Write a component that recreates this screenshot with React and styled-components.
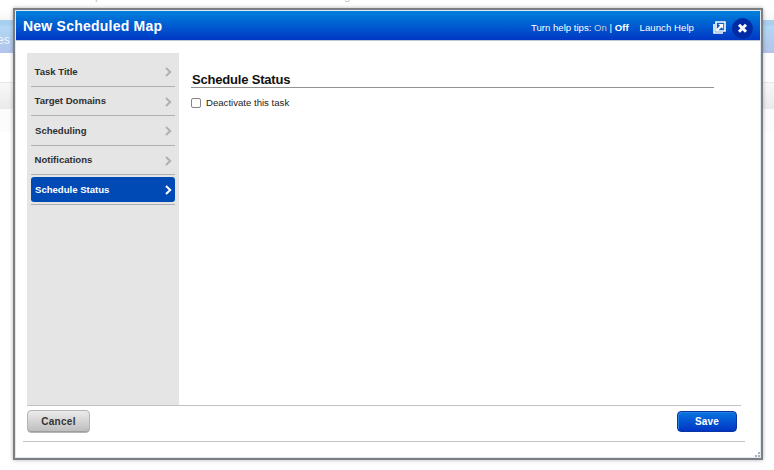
import React from "react";
import styled, { createGlobalStyle } from "styled-components";

const GlobalStyle = createGlobalStyle`
  * { box-sizing: border-box; }
  body { margin: 0; background: #fff; font-family: "Liberation Sans", Arial, sans-serif; }
`;

const Page = styled.div`
  position: relative;
  width: 774px;
  height: 470px;
  overflow: hidden;
  background: #fff;
`;

const TopStrip = styled.div`
  display: flex;
  gap: 243px;
  height: 20px;
  padding-left: 95px;
  background: linear-gradient(#fff 0 10px, #f6f6f6);
`;

const Descender = styled.span`
  height: 2px;
  margin-top: -10px;
  line-height: 12px;
  font-size: 11px;
  color: #c4bab4;
`;

const NavBar = styled.div`
  display: flex;
  align-items: center;
  height: 33px;
  padding-top: 7px;
  background: linear-gradient(#a9cfef 0 5px, #b0d8f4 6px, #b3c3ed);
  font-size: 12px;
  color: #eef5fc;
  text-indent: -3px;
`;

const SubBar = styled.div`
  height: 27px;
  margin-top: 29px;
  border-top: 1px solid #e8e8e8;
  background: linear-gradient(#f8f8f8, #eaeaea);
`;

const LowerBand = styled.div`
  height: 23px;
  background: #fcfcfc;
`;

const Dialog = styled.section`
  position: absolute;
  left: 13px;
  top: 8px;
  display: flex;
  flex-direction: column;
  width: 750px;
  height: 452px;
  border: 2px solid #7b7f84;
  background: #fff;
  box-shadow: inset 0 0 0 1px #dfe9f5, 0 0 4px rgba(0, 0, 0, 0.3);
`;

const Header = styled.header`
  display: flex;
  align-items: center;
  height: 30px;
  margin: 1px 1px 0;
  padding: 0 7px;
  border-bottom: 1px solid #bfc6d6;
  background: linear-gradient(#0081dc, #0037c4);
  color: #fff;
  flex: none;
`;

const Title = styled.h1`
  flex: 1;
  margin: 0;
  font-size: 14px;
  line-height: 16px;
  letter-spacing: 0.23px;
`;

const HelpTips = styled.div`
  margin: 5px 11px 0 0;
  font-size: 9.6px;
  line-height: 12px;
  white-space: pre;
`;

const Muted = styled.span`
  color: #c6cbd6;
`;

const HelpLink = styled.a`
  margin: 5px 19px 0 0;
  font-size: 9.6px;
  line-height: 12px;
  letter-spacing: 0.05px;
`;

const IconButton = styled.button`
  display: flex;
  padding: 0;
  border: 0;
  background: none;
  margin: ${(p) => p.$margin};
`;

const Body = styled.div`
  display: flex;
  height: 353px;
  margin: 12px 20px 0 12px;
  border-bottom: 1px solid #c2c2c2;
  flex: none;
`;

const Sidebar = styled.nav`
  width: 152px;
  padding: 4px;
  background: #e5e5e5;
`;

const NavLabel = styled.a`
  display: flex;
  align-items: center;
  justify-content: space-between;
  height: 25px;
  padding: 0 3px 0 ${(p) => p.$indent}px;
  border-radius: 3px;
  background: ${(p) => (p.$active ? "#004ab5" : "transparent")};
  color: ${(p) => (p.$active ? "#fff" : "#303030")};
  font-size: 9.6px;
  font-weight: bold;
  line-height: 12px;
  letter-spacing: -0.02px;
  svg {
    margin-top: 1px;
    stroke: ${(p) => (p.$active ? "#fff" : "#b0b0b0")};
  }
`;

const NavItem = styled.div`
  height: 30px;
  padding: 2px 0;
  border-bottom: 1px solid #afafaf;
  &:nth-child(even) {
    height: 29px;
    padding-top: 1px;
  }
  &:nth-child(even) svg { margin-top: 3px; }
`;

const Content = styled.main`
  width: 535px;
  padding: 17px 0 0 13px;
`;

const SectionTitle = styled.h2`
  height: 18px;
  margin: 0 0 9px -1px;
  padding-left: 1px;
  border-bottom: 1px solid #929292;
  color: #111;
  font-size: 13px;
  line-height: 19px;
  letter-spacing: -0.19px;
`;

const CheckRow = styled.label`
  display: flex;
  align-items: center;
  gap: 5px;
  height: 12px;
  margin-left: -1px;
  color: #222;
  font-size: 9.6px;
  line-height: 12px;
`;

const Checkbox = styled.input`
  appearance: none;
  width: 10px;
  height: 10px;
  margin: 0;
  border: 1px solid #858585;
  border-radius: 2px;
  background: #fff;
`;

const Footer = styled.footer`
  display: flex;
  justify-content: space-between;
  height: 36px;
  margin: 0 16px 0 8px;
  padding: 4px 8px 0 4px;
  border-bottom: 1px solid #c4c4c4;
  flex: none;
`;

const Button = styled.button`
  height: ${(p) => (p.$primary ? 21 : 23)}px;
  width: ${(p) => (p.$primary ? 60 : 63)}px;
  margin-top: ${(p) => (p.$primary ? 1 : 0)}px;
  padding: 0;
  border: 1px solid ${(p) => (p.$primary ? "#0835a3" : "#b4b4b4")};
  border-radius: 4px;
  background: ${(p) => (p.$primary ? "linear-gradient(#0874df, #0035c4)" : "linear-gradient(#ececec, #bcbcbc)")};
  box-shadow: ${(p) => (p.$primary ? "inset 1px 1px 0 #2483e0" : "inset 0 -1px 0 #9e9e9e")};
  color: ${(p) => (p.$primary ? "#fff" : "#333")};
  font: bold 10px/12px "Liberation Sans", Arial, sans-serif;
  letter-spacing: ${(p) => (p.$primary ? 0.15 : 0.3)}px;
`;

const ResizeGrip = styled.svg`
  position: absolute;
  right: 1px;
  bottom: 1px;
`;

const items = [
  { label: "Task Title", indent: 3.5 },
  { label: "Target Domains", indent: 3.5 },
  { label: "Scheduling", indent: 4 },
  { label: "Notifications", indent: 3.5 },
  { label: "Schedule Status", indent: 4, active: true },
];

const Chevron = () => (
  <svg width="7" height="10" viewBox="0 0 7 10" fill="none" strokeWidth="2">
    <path d="M1 1L5.2 5L1 9" />
  </svg>
);

const PopOutIcon = () => (
  <svg width="13" height="13" viewBox="0 0 13 13" fill="none" stroke="#fff">
    <path d="M3 1H12V10H3Z" fill="#1260c4" strokeWidth="1.6" />
    <path d="M1 3V12H10" strokeWidth="1.6" />
    <path d="M4 9.2L8.5 4.7" strokeWidth="2.2" />
    <path d="M5.3 3H10.2V7.9Z" fill="#fff" stroke="none" />
  </svg>
);

const CloseIcon = () => (
  <svg width="21" height="21" viewBox="0 0 21 21">
    <circle cx="10.5" cy="10.5" r="10.4" fill="#012ba4" />
    <path d="M7 6.8L14 13.8M14 6.8L7 13.8" stroke="#fff" strokeWidth="3" />
  </svg>
);

export default function App() {
  return (
    <Page>
      <GlobalStyle />
      <TopStrip>
        <Descender>p</Descender>
        <Descender>g</Descender>
      </TopStrip>
      <NavBar>es</NavBar>
      <SubBar />
      <LowerBand />
      <Dialog>
        <Header>
          <Title>New Scheduled Map</Title>
          <HelpTips>Turn help tips: <Muted>On</Muted> | <b>Off</b></HelpTips>
          <HelpLink>Launch Help</HelpLink>
          <IconButton $margin="3px 6px 0 0" aria-label="Open in new window"><PopOutIcon /></IconButton>
          <IconButton $margin="6px 0 0 0" aria-label="Close"><CloseIcon /></IconButton>
        </Header>
        <Body>
          <Sidebar>
            {items.map((item) => (
              <NavItem key={item.label}>
                <NavLabel $active={item.active} $indent={item.indent}>
                  {item.label}
                  <Chevron />
                </NavLabel>
              </NavItem>
            ))}
          </Sidebar>
          <Content>
            <SectionTitle>Schedule Status</SectionTitle>
            <CheckRow><Checkbox type="checkbox" />Deactivate this task</CheckRow>
          </Content>
        </Body>
        <Footer>
          <Button>Cancel</Button>
          <Button $primary>Save</Button>
        </Footer>
        <ResizeGrip width="5" height="5" viewBox="0 0 5 5" fill="#aab0b5">
          <path d="M3 0h2v2h-2zM0 3h2v2h-2zM3 3h2v2h-2z" />
        </ResizeGrip>
      </Dialog>
    </Page>
  );
}
